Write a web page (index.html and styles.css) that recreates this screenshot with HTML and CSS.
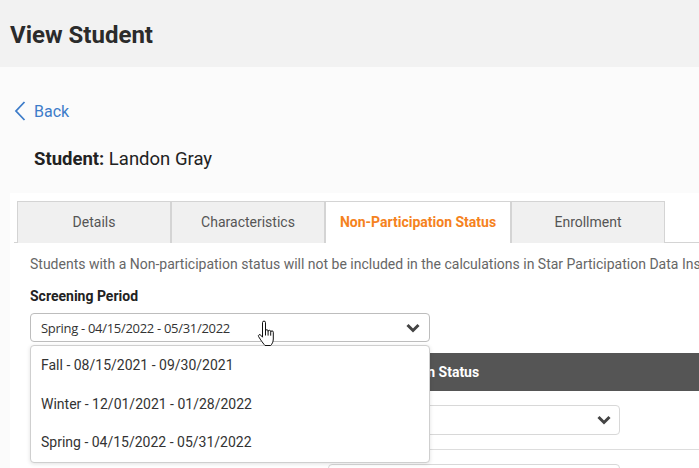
FILE: index.html
```html
<!DOCTYPE html>
<html>
<head>
<meta charset="utf-8">
<link rel="stylesheet" href="styles.css">
</head>
<body>
<header class="topbar"><h1 class="title">View Student</h1></header>
<main class="page">
  <a class="back" href="#">
    <svg class="back-icon" width="12" height="20" viewBox="0 0 12 20"><path d="M10.5 1 L2 10 L10.5 19" fill="none" stroke="#3d7cc9" stroke-width="1.8"/></svg>
    <span>Back</span>
  </a>
  <div class="student"><b>Student:</b> Landon Gray</div>
  <section class="panel">
    <nav class="tabs">
      <div class="tab w154">Details</div>
      <div class="tab w154">Characteristics</div>
      <div class="tab active w186">Non-Participation Status</div>
      <div class="tab w154">Enrollment</div>
    </nav>
    <div class="content">
      <p class="desc">Students with a Non-participation status will not be included in the calculations in Star Participation Data Insights.</p>
      <div class="label">Screening Period</div>
      <div class="field">
        <div class="select main-select">
          <span>Spring - 04/15/2022 - 05/31/2022</span>
          <svg class="chev" width="14" height="10" viewBox="0 0 14 10"><path d="M1.5 2 L7 7.5 L12.5 2" fill="none" stroke="#444" stroke-width="3"/></svg>
        </div>
        <ul class="menu">
          <li>Fall - 08/15/2021 - 09/30/2021</li>
          <li>Winter - 12/01/2021 - 01/28/2022</li>
          <li>Spring - 04/15/2022 - 05/31/2022</li>
        </ul>
        <svg class="cursor" width="19" height="27" viewBox="0 0 19 27"><path d="M5.5 2.6 a1.5 1.5 0 0 1 3 0 V11 a1.3 1.3 0 0 1 2.6 0 V11.6 a1.3 1.3 0 0 1 2.6 0 V12.2 a1.3 1.3 0 0 1 2.6 0 V19 c0 3 -1.3 5 -2.6 6.5 H8 c-1.2 -1.3 -2.8 -3.5 -4.3 -5.6 L1.6 16.6 a1.3 1.3 0 0 1 2.2 -1.4 L5.5 17.2 Z M8.5 11 v4.5 M11.1 11.6 v4 M13.7 12.2 v3.5" fill="#fff" stroke="#111" stroke-width="1" stroke-linejoin="round"/></svg>
      </div>
      <div class="table">
        <div class="thead">
          <div class="th c1"></div>
          <div class="th c2">Non-Participation Status</div>
        </div>
        <div class="tr">
          <div class="td c1"></div>
          <div class="td c2"><div class="select row-select"><span></span><svg class="chev" width="14" height="10" viewBox="0 0 14 10"><path d="M1.5 2 L7 7.5 L12.5 2" fill="none" stroke="#444" stroke-width="3"/></svg></div></div>
        </div>
        <div class="tr">
          <div class="td c1"></div>
          <div class="td c2"><div class="select row-select"><span></span><svg class="chev" width="14" height="10" viewBox="0 0 14 10"><path d="M1.5 2 L7 7.5 L12.5 2" fill="none" stroke="#444" stroke-width="3"/></svg></div></div>
        </div>
      </div>
    </div>
  </section>
</main>
</body>
</html>
```
FILE: styles.css
```css
html, body { margin: 0; padding: 0; }
body {
  background: #fbfbfb;
  font-family: Roboto, "Liberation Sans", sans-serif;
  color: #222;
  width: 699px;
  height: 468px;
  overflow: hidden;
}
.topbar {
  height: 67px;
  background: #f2f2f2;
  display: flex;
  align-items: center;
  padding-left: 10px;
}
.title {
  margin: 0;
  font-size: 24px;
  font-weight: 700;
  color: #2b2b2b;
  line-height: 30px;
  padding-top: 2px;
}
.page { padding-top: 33px; }
.back {
  display: flex;
  align-items: center;
  gap: 8px;
  margin-left: 14px;
  color: #3d7cc9;
  text-decoration: none;
  font-size: 16px;
  height: 22px;
}
.student {
  margin: 25px 0 0 34px;
  font-size: 18.5px;
  line-height: 24px;
  color: #222;
}
.panel {
  margin: 22px 0 0 10px;
  background: #fff;
  padding: 8px 0 0 4px;
  height: 267px;
  overflow: hidden;
}
.tabs {
  display: flex;
  border-bottom: 1px solid #d4d4d4;
  padding-left: 3px;
  height: 41px;
}
.tab {
  box-sizing: border-box;
  height: 42px;
  border: 1px solid #d4d4d4;
  border-bottom: none;
  background: #f0f0f0;
  color: #555;
  font-size: 14px;
  display: flex;
  align-items: center;
  justify-content: center;
  padding-bottom: 2px;
}
.w154 { width: 154px; }
.w186 { width: 186px; }
.tab.active {
  background: #fff;
  color: #f58220;
  font-weight: 700;
}
.content { padding-left: 16px; }
.desc {
  margin: 11px 0 0;
  font-size: 14px;
  line-height: 20px;
  color: #666;
  white-space: nowrap;
}
.label {
  margin-top: 12px;
  font-size: 14px;
  font-weight: 700;
  line-height: 20px;
  color: #222;
}
.field {
  position: relative;
  width: 400px;
  margin-top: 7px;
}
.select {
  box-sizing: border-box;
  display: flex;
  align-items: center;
  justify-content: space-between;
  background: #fff;
  border-radius: 4px;
}
.main-select {
  height: 29px;
  border: 1px solid #bdbdbd;
  padding: 0 9px 0 10px;
  font-family: "Open Sans", sans-serif;
  font-size: 13px;
  letter-spacing: -0.3px;
  color: #333;
}
.chev { display: block; }
.menu {
  position: absolute;
  left: 0;
  top: 32px;
  width: 400px;
  box-sizing: border-box;
  margin: 0;
  padding: 0;
  list-style: none;
  background: #fff;
  border: 1px solid #cfcfcf;
  border-radius: 4px;
  box-shadow: 0 1px 4px rgba(0,0,0,0.12);
  z-index: 5;
}
.menu li {
  padding: 0 10px;
  height: 38.5px;
  line-height: 38.5px;
  font-size: 14px;
  color: #333;
}
.cursor {
  position: absolute;
  left: 227px;
  top: 7px;
  z-index: 6;
}
.table { margin-top: 11px; }
.thead {
  display: flex;
  background: #555;
  color: #fff;
  height: 38px;
  align-items: center;
  font-weight: 700;
  font-size: 14px;
}
.c1 { width: 288px; padding-left: 10px; box-sizing: border-box; }
.c2 { flex: 1; padding-left: 10px; box-sizing: border-box; }
.th.c2 { padding-left: 5px; }
.tr {
  display: flex;
  align-items: center;
  height: 58px;
  border-bottom: 1px solid #ddd;
  font-size: 14px;
  color: #333;
}
.row-select {
  width: 292px;
  height: 30px;
  border: 1px solid #d8d8d8;
  padding: 0 8px 0 10px;
}
```
